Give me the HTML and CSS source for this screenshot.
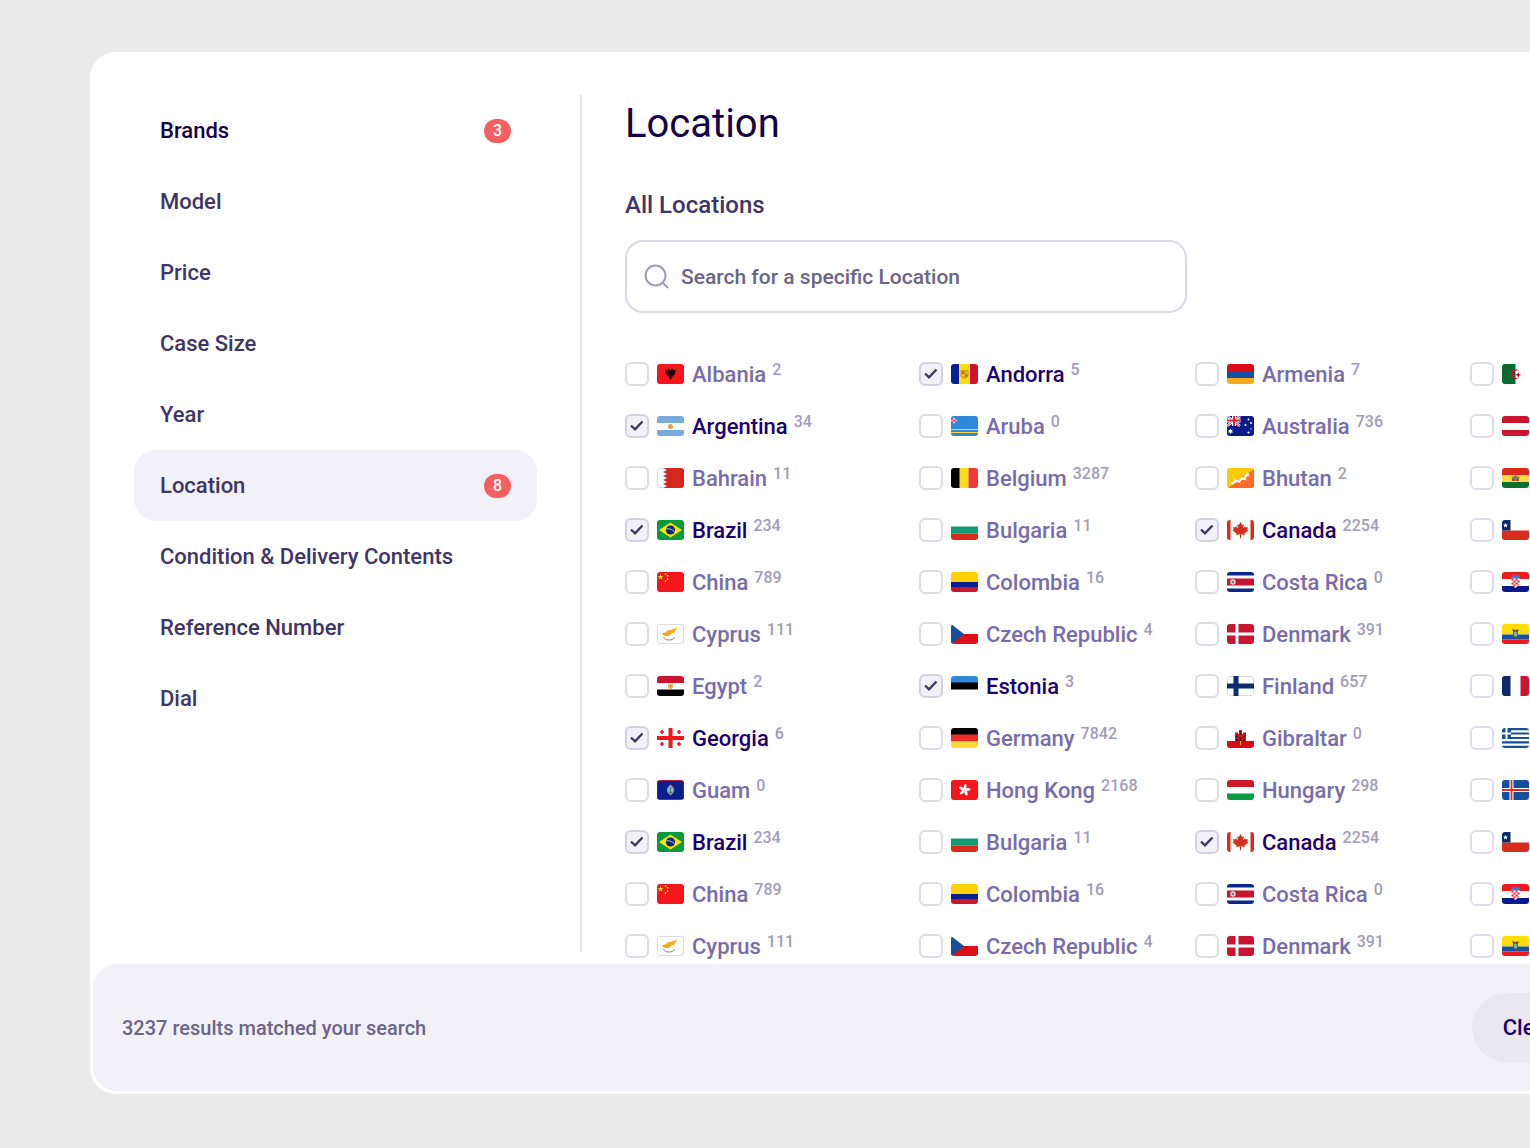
FILE: index.html
```html
<!DOCTYPE html>
<html lang="en">
<head>
<meta charset="utf-8">
<meta name="viewport" content="width=device-width, initial-scale=1">
<title>Filters – Location</title>
<link rel="stylesheet" href="styles.css">
</head>
<body>
<svg class="sprite" aria-hidden="true">
  <symbol id="al" viewBox="0 0 27 20"><path fill="#f7141c" d="M0 0h27v20H0z"/><path fill="#200508" d="M13.500 6.500 12 4.500l-2 .7 1.500 1.300-3.300-.7v2l1.500.8-1.500.6 1.800 1-.9 1.300 2-.3-.7 1.600 1.500-.5.3 1.700 1.300 2 1.300-2 .3-1.700 1.500.5-.7-1.600 2 .3-.9-1.300 1.800-1-1.500-.6 1.500-.8v-2l-3.300.7L17 5.200l-2-.7z"/></symbol>
  <symbol id="ad" viewBox="0 0 27 20"><path fill="#0a2090" d="M0 0h9v20H0z"/><path fill="#ffdc16" d="M8 0h11v20H8z"/><path fill="#cf1230" d="M19 0h8v20h-8z"/><path fill="#d99a1c" d="M9.500 6h8v6l-2 2.500h-4L9.500 12z"/><path fill="#b8641e" d="M11 7.500h2v2h-2zm3.500 3h2v2h-2z"/><path fill="#f3cf48" d="M14.500 7.500h2v2h-2zM11 10.500h2v2h-2z"/></symbol>
  <symbol id="am" viewBox="0 0 27 20"><path fill="#dc0a14" d="M0 0h27v7H0z"/><path fill="#1450a0" d="M0 7h27v7H0z"/><path fill="#f8a81c" d="M0 14h27v6H0z"/></symbol>
  <symbol id="dz" viewBox="0 0 27 20"><path fill="#fff" d="M0 0h27v20H0z"/><path fill="#046a32" d="M0 0h13.500v20H0z"/><path fill="#d21034" d="M17 6.600a5 5 0 1 0 0 7.200 4 4 0 1 1 0-7.200zM13.500 10.200l2.200-.5 1.200-1.800.2 2.200 2 .9-2 .6-.2 2.200-1.300-1.800z"/></symbol>
  <symbol id="ar" viewBox="0 0 27 20"><path fill="#fff" d="M0 0h27v20H0z"/><path fill="#78aadc" d="M0 0h27v7H0zm0 14h27v6H0z"/><circle cx="13.500" cy="10.500" r="2.500" fill="#e8a04a"/></symbol>
  <symbol id="aw" viewBox="0 0 27 20"><path fill="#3187d9" d="M0 0h27v20H0z"/><path fill="#ffd93c" d="M0 13h27v1H0zm0 3h27v1H0z"/><path fill="#fff" d="m3 1 1 2.600 2.600 1L4 5.600 3 8.200 2 5.600-.6 4.600 2 3.600z"/><path fill="#ef4040" d="m3 2.200.7 1.700 1.700.7-1.700.7L3 7l-.7-1.700-1.700-.7 1.700-.7z"/></symbol>
  <symbol id="au" viewBox="0 0 27 20"><path fill="#0a1c8c" d="M0 0h27v20H0z"/><path stroke="#fff" stroke-width="2.500" d="m0 0 13 10M13 0 0 10"/><path stroke="#e4173a" d="m0 0 13 10M13 0 0 10"/><path stroke="#fff" stroke-width="4" d="M7 0v10M0 4.500h13.500"/><path stroke="#f01c3c" stroke-width="2" d="M7 0v10M0 4.500h13.500"/><g fill="#fff"><path d="m3.500 12.500.7 1.500 1.600-.3-.8 1.400 1 1.300-1.600.1-.9 1.500-.9-1.500-1.600-.1 1-1.300-.8-1.400 1.600.3z"/><circle cx="18.500" cy="9" r="1"/><circle cx="24" cy="7" r="1"/><circle cx="21.500" cy="3.500" r="1"/><circle cx="24" cy="13" r=".7"/><circle cx="21.500" cy="16.500" r="1.100"/></g></symbol>
  <symbol id="at" viewBox="0 0 27 20"><path fill="#fff" d="M0 0h27v20H0z"/><path fill="#cb1530" d="M0 0h27v7H0zm0 14h27v6H0z"/></symbol>
  <symbol id="bh" viewBox="0 0 27 20"><path fill="#fff" d="M0 0h27v20H0z"/><path fill="#d4271e" d="M27 0H6l4 2-4 2 4 2-4 2 4 2-4 2 4 2-4 2 4 2-4 2h21z"/><path fill="none" stroke="#dcd9e8" d="M7 .5H3A2.500 2.500 0 0 0 .5 3v14A2.500 2.500 0 0 0 3 19.500h4"/></symbol>
  <symbol id="be" viewBox="0 0 27 20"><path d="M0 0h9v20H0z"/><path fill="#ffd91c" d="M8.500 0h9v20h-9z"/><path fill="#f03a3a" d="M17.500 0H27v20h-9.500z"/></symbol>
  <symbol id="bt" viewBox="0 0 27 20"><path fill="#ffca0a" d="M0 0h27v20H0z"/><path fill="#ff6c24" d="M27 1v19H1z"/><path fill="none" stroke="#fff" stroke-width="2" stroke-linecap="round" stroke-linejoin="round" d="m5 15.500 2-1 2-1.500 3.500.5 2-3 3 .5 1.500-3.500 2-1.500"/><path fill="none" stroke="#fff" stroke-width="1" stroke-linecap="round" d="m11 13 2.500 2.500M16 10l3.500 2M19 7.500l3 .5M17 6.500l-1-1M8 13l-.5-2"/></symbol>
  <symbol id="bo" viewBox="0 0 27 20"><path fill="#de2a18" d="M0 0h27v7H0z"/><path fill="#ffdb3c" d="M0 7h27v7H0z"/><path fill="#0a7230" d="M0 14h27v6H0z"/><path fill="#a86a24" d="m13.500 6.500 1.500 2 2.500.5-1 4h-6l-1-4L12 8.500z"/><circle cx="13.500" cy="10.500" r="1.800" fill="#5a8a80"/><path fill="#d03020" d="M10 11h2v2h-2zm5 0h2v2h-2z"/></symbol>
  <symbol id="br" viewBox="0 0 27 20"><path fill="#089a3c" d="M0 0h27v20H0z"/><path fill="#ffe000" d="M13.500 2.500 25 10l-11.500 7.500L2 10z"/><circle cx="13.500" cy="10" r="4.600" fill="#0c2878"/><path fill="none" stroke="#a8c8e0" d="M9.200 8.800c3-.5 6.500.8 8.500 3.200"/></symbol>
  <symbol id="bg" viewBox="0 0 27 20"><path fill="#fff" d="M0 0h27v7H0z"/><path fill="#129a74" d="M0 6.500h27v7H0z"/><path fill="#d82c1c" d="M0 13.500h27V20H0z"/></symbol>
  <symbol id="ca" viewBox="0 0 27 20"><path fill="#fff" d="M0 0h27v20H0z"/><path fill="#d82c1c" d="M0 0h3.500v20H0zm23.500 0H27v20h-3.500z"/><path fill="#d82c1c" d="m13.500 2 1.700 3 1.600-.8-.7 4 2.300-2 .5 1.300 2.100-.3-.7 2.300 1.200.7-4 3.200.5 1.500-4-.6v3.900h-1v-3.900l-4 .6.500-1.500-4-3.200 1.200-.7L6 7.200l2.100.3.500-1.300 2.300 2-.7-4 1.600.8z"/></symbol>
  <symbol id="cl" viewBox="0 0 27 20"><path fill="#fff" d="M0 0h27v20H0z"/><path fill="#d82c1c" d="M0 10.500h27V20H0z"/><path fill="#0a2a6c" d="M0 0h8.500v10.500H0z"/><path fill="#fff" d="m3.500 3 .7 1.600h1.600l-1.200 1.200.5 1.700-1.600-.9-1.600.9.500-1.700-1.200-1.200h1.600z"/></symbol>
  <symbol id="cn" viewBox="0 0 27 20"><path fill="#f5161c" d="M0 0h27v20H0z"/><g fill="#ffdc18"><path d="m3.500 2 .8 2h2.200L4.700 5.300l.7 2.200-1.900-1.300-1.900 1.300.7-2.200L.5 4h2.200z"/><circle cx="8.500" cy="2" r=".9"/><circle cx="10.500" cy="4" r=".9"/><circle cx="10.500" cy="7" r=".9"/><circle cx="8.500" cy="9" r=".9"/></g></symbol>
  <symbol id="co" viewBox="0 0 27 20"><path fill="#ffd000" d="M0 0h27v10H0z"/><path fill="#0a1e90" d="M0 10h27v5H0z"/><path fill="#cb1530" d="M0 15h27v5H0z"/></symbol>
  <symbol id="cr" viewBox="0 0 27 20"><path fill="#fff" d="M0 0h27v20H0z"/><path fill="#0a2890" d="M0 0h27v3.500H0zm0 16.500h27V20H0z"/><path fill="#cb1530" d="M0 6.500h27v7H0z"/><circle cx="6" cy="10" r="2.700" fill="#e8e8e4"/><circle cx="6" cy="10" r="1.500" fill="#6a8a80"/></symbol>
  <symbol id="hr" viewBox="0 0 27 20"><path fill="#fff" d="M0 0h27v20H0z"/><path fill="#f5161c" d="M0 0h27v7H0z"/><path fill="#0a1a8c" d="M0 14h27v6H0z"/><path fill="#3a78c8" d="m9 4 1.500-1.500L12 3.500l1.500-1.500L15 3.500l1.500-1L18 4l-.5 3h-8z"/><path fill="#fff" d="M9.500 6.500h8v6l-4 3.500-4-3.500z"/><path fill="#f5161c" d="M9.500 6.500h2v2h-2zm4 0h2v2h-2zm-2 2h2v2h-2zm4 0h2v2h-2zm-6 2h2v2h-2zm4 0h2v2h-2zm-2 2h2v2h-2zm4 0h2l-2 2z"/></symbol>
  <symbol id="cy" viewBox="0 0 27 20"><rect x=".5" y=".5" width="26" height="19" rx="2.500" fill="#fff" stroke="#dcd9e8"/><path fill="#f8a81c" d="m5.500 9 3-.5 2-2 4-.7L21 3.500 18 7l-.5 1.500-3 .8L12 12 8 12l-2.500-1.500z"/><path fill="none" stroke="#76859a" d="M6.500 13c1 2.500 3 3 5.500 3s4.500-.5 5.500-3"/></symbol>
  <symbol id="cz" viewBox="0 0 27 20"><path fill="#fff" d="M0 0h27v20H0z"/><path fill="#de0f17" d="M0 10h27v10H0z"/><path fill="#17509a" d="m0 0 13 10L0 20z"/></symbol>
  <symbol id="dk" viewBox="0 0 27 20"><path fill="#cb1530" d="M0 0h27v20H0z"/><path stroke="#fff" stroke-width="3" d="M10 0v20M0 10h27"/></symbol>
  <symbol id="ec" viewBox="0 0 27 20"><path fill="#ffdd00" d="M0 0h27v10.500H0z"/><path fill="#1450a0" d="M0 10.500h27v5H0z"/><path fill="#f5161c" d="M0 15.500h27V20H0z"/><path fill="#6a5a30" d="m10 5 3.500 1L17 5l-1 2.500V12l-2.500 3-2.500-3V7.500z"/><ellipse cx="13.500" cy="10" rx="1.700" ry="2.500" fill="#78b4a8"/></symbol>
  <symbol id="eg" viewBox="0 0 27 20"><path fill="#fff" d="M0 0h27v20H0z"/><path fill="#cb1530" d="M0 0h27v7H0z"/><path d="M0 13.500h27V20H0z"/><path fill="#e2c068" d="M11 7.500h1.500l1 .7 1-.7H16v4l-1 1.500h-3l-1-1.500z"/><path fill="#b88838" d="M13 9h1v2.500h-1z"/></symbol>
  <symbol id="ee" viewBox="0 0 27 20"><path fill="#fff" d="M0 0h27v20H0z"/><path fill="#3187d9" d="M0 0h27v7H0z"/><path d="M0 6.500h27v7H0z"/></symbol>
  <symbol id="fi" viewBox="0 0 27 20"><rect x=".5" y=".5" width="26" height="19" rx="2.500" fill="#fff" stroke="#dcd9e8"/><path stroke="#0c2c6e" stroke-width="5" d="M9 0v20M0 10h27"/></symbol>
  <symbol id="fr" viewBox="0 0 27 20"><path fill="#fff" d="M0 0h27v20H0z"/><path fill="#0c2866" d="M0 0h8.500v20H0z"/><path fill="#cf1430" d="M18.500 0H27v20h-8.500z"/></symbol>
  <symbol id="ge" viewBox="0 0 27 20"><path fill="#fff" d="M0 0h27v20H0z"/><path stroke="#f5161c" stroke-width="4" d="M13.500 0v20M0 10h27"/><path stroke="#f5161c" stroke-width="1.700" d="M5 2v4M3 4h4m15-2v4m-2-2h4M5 14v4m-2-2h4m15-2v4m-2-2h4"/></symbol>
  <symbol id="de" viewBox="0 0 27 20"><path d="M0 0h27v7H0z"/><path fill="#f02c26" d="M0 6.500h27v7H0z"/><path fill="#ffd93a" d="M0 13.500h27V20H0z"/></symbol>
  <symbol id="gi" viewBox="0 0 27 20"><path fill="#fff" d="M0 0h27v20H0z"/><path fill="#dc0a14" d="M0 13h27v7H0z"/><path fill="#c81820" d="M8 4.500h3V6h1V2h3v4h1V4.500h3V13H8z"/><path fill="#401014" d="M9 7.500h1.500v2H9zm4-4h1v3h-1zm3.500 4H18v2h-1.500zM9 11h2v2H9zm3.500-1.500h2V13h-2zM16 11h2v2h-2z"/><path fill="#e8b030" d="M13 13h1v4h-1z"/></symbol>
  <symbol id="gr" viewBox="0 0 27 20"><path fill="#fff" d="M0 0h27v20H0z"/><path fill="#17509a" d="M0 0h27v2.200H0zm0 4.400h27v2.200H0zm0 4.500h27v2.200H0zm0 4.400h27v2.200H0zm0 4.500h27V20H0zM0 0h9v11H0z"/><path stroke="#fff" stroke-width="2" d="M4.500 0v11M0 5.500h9"/></symbol>
  <symbol id="gu" viewBox="0 0 27 20"><path fill="#b02038" d="M0 0h27v20H0z"/><path fill="#0a1e8c" d="M.5 1h26v18H.5z"/><path fill="#c45a48" d="M13.500 4.500c5 3.500 5 7.500 0 11-5-3.500-5-7.500 0-11z"/><path fill="#78b8dc" d="M13.500 5.200c4.300 3.200 4.300 6.400 0 9.600-4.300-3.200-4.300-6.400 0-9.600z"/><path fill="#4a8050" d="M13 7h1v5h-1zM11.500 12h4l-2 2z"/></symbol>
  <symbol id="hk" viewBox="0 0 27 20"><path fill="#f5161c" d="M0 0h27v20H0z"/><g fill="#fff"><ellipse cx="13.500" cy="6.800" rx="1.500" ry="2.900" transform="rotate(10 13.500 10)"/><ellipse cx="13.500" cy="6.800" rx="1.500" ry="2.900" transform="rotate(82 13.500 10)"/><ellipse cx="13.500" cy="6.800" rx="1.500" ry="2.900" transform="rotate(154 13.500 10)"/><ellipse cx="13.500" cy="6.800" rx="1.500" ry="2.900" transform="rotate(226 13.500 10)"/><ellipse cx="13.500" cy="6.800" rx="1.500" ry="2.900" transform="rotate(298 13.500 10)"/></g></symbol>
  <symbol id="hu" viewBox="0 0 27 20"><path fill="#fff" d="M0 0h27v20H0z"/><path fill="#cf1a2c" d="M0 0h27v7H0z"/><path fill="#0a9a44" d="M0 13.500h27V20H0z"/></symbol>
  <symbol id="is" viewBox="0 0 27 20"><path fill="#1450a0" d="M0 0h27v20H0z"/><path stroke="#fff" stroke-width="4" d="M9.500 0v20M0 10h27"/><path stroke="#e0301c" stroke-width="1.800" d="M9.500 0v20M0 10h27"/></symbol>
</svg>

<div class="stage">
  <div class="panel">
    <div class="panel-body">
      <nav class="sidebar" aria-label="Filters">
        <ul class="filters">
          <li><a class="filter filter-set" href="#">Brands <span class="badge">3</span></a></li>
          <li><a class="filter" href="#">Model</a></li>
          <li><a class="filter" href="#">Price</a></li>
          <li><a class="filter" href="#">Case Size</a></li>
          <li><a class="filter" href="#">Year</a></li>
          <li><a class="filter filter-active" href="#" aria-current="true">Location <span class="badge">8</span></a></li>
          <li><a class="filter" href="#">Condition &amp; Delivery Contents</a></li>
          <li><a class="filter" href="#">Reference Number</a></li>
          <li><a class="filter" href="#">Dial</a></li>
        </ul>
      </nav>
      <main class="content">
        <h1 class="title">Location</h1>
        <label class="search-label" for="search">All Locations</label>
        <div class="search">
          <svg class="search-icon" viewBox="0 0 25 25" aria-hidden="true"><circle cx="11.500" cy="11.500" r="10"/><path d="m18.500 18.500 5.500 5.500"/></svg>
          <input class="search-input" id="search" type="text" placeholder="Search for a specific Location">
        </div>
        <div class="countries">
          <label class="country"><input type="checkbox"><svg class="flag"><use href="#al"/></svg><span>Albania</span><sup>2</sup></label>
          <label class="country"><input type="checkbox" checked><svg class="flag"><use href="#ad"/></svg><span>Andorra</span><sup>5</sup></label>
          <label class="country"><input type="checkbox"><svg class="flag"><use href="#am"/></svg><span>Armenia</span><sup>7</sup></label>
          <label class="country"><input type="checkbox"><svg class="flag"><use href="#dz"/></svg><span>Algeria</span></label>

          <label class="country"><input type="checkbox" checked><svg class="flag"><use href="#ar"/></svg><span>Argentina</span><sup>34</sup></label>
          <label class="country"><input type="checkbox"><svg class="flag"><use href="#aw"/></svg><span>Aruba</span><sup>0</sup></label>
          <label class="country"><input type="checkbox"><svg class="flag"><use href="#au"/></svg><span>Australia</span><sup>736</sup></label>
          <label class="country"><input type="checkbox"><svg class="flag"><use href="#at"/></svg><span>Austria</span></label>

          <label class="country"><input type="checkbox"><svg class="flag"><use href="#bh"/></svg><span>Bahrain</span><sup>11</sup></label>
          <label class="country"><input type="checkbox"><svg class="flag"><use href="#be"/></svg><span>Belgium</span><sup>3287</sup></label>
          <label class="country"><input type="checkbox"><svg class="flag"><use href="#bt"/></svg><span>Bhutan</span><sup>2</sup></label>
          <label class="country"><input type="checkbox"><svg class="flag"><use href="#bo"/></svg><span>Bolivia</span></label>

          <label class="country"><input type="checkbox" checked><svg class="flag"><use href="#br"/></svg><span>Brazil</span><sup>234</sup></label>
          <label class="country"><input type="checkbox"><svg class="flag"><use href="#bg"/></svg><span>Bulgaria</span><sup>11</sup></label>
          <label class="country"><input type="checkbox" checked><svg class="flag"><use href="#ca"/></svg><span>Canada</span><sup>2254</sup></label>
          <label class="country"><input type="checkbox"><svg class="flag"><use href="#cl"/></svg><span>Chile</span></label>

          <label class="country"><input type="checkbox"><svg class="flag"><use href="#cn"/></svg><span>China</span><sup>789</sup></label>
          <label class="country"><input type="checkbox"><svg class="flag"><use href="#co"/></svg><span>Colombia</span><sup>16</sup></label>
          <label class="country"><input type="checkbox"><svg class="flag"><use href="#cr"/></svg><span>Costa Rica</span><sup>0</sup></label>
          <label class="country"><input type="checkbox"><svg class="flag"><use href="#hr"/></svg><span>Croatia</span></label>

          <label class="country"><input type="checkbox"><svg class="flag"><use href="#cy"/></svg><span>Cyprus</span><sup>111</sup></label>
          <label class="country"><input type="checkbox"><svg class="flag"><use href="#cz"/></svg><span>Czech Republic</span><sup>4</sup></label>
          <label class="country"><input type="checkbox"><svg class="flag"><use href="#dk"/></svg><span>Denmark</span><sup>391</sup></label>
          <label class="country"><input type="checkbox"><svg class="flag"><use href="#ec"/></svg><span>Ecuador</span></label>

          <label class="country"><input type="checkbox"><svg class="flag"><use href="#eg"/></svg><span>Egypt</span><sup>2</sup></label>
          <label class="country"><input type="checkbox" checked><svg class="flag"><use href="#ee"/></svg><span>Estonia</span><sup>3</sup></label>
          <label class="country"><input type="checkbox"><svg class="flag"><use href="#fi"/></svg><span>Finland</span><sup>657</sup></label>
          <label class="country"><input type="checkbox"><svg class="flag"><use href="#fr"/></svg><span>France</span></label>

          <label class="country"><input type="checkbox" checked><svg class="flag"><use href="#ge"/></svg><span>Georgia</span><sup>6</sup></label>
          <label class="country"><input type="checkbox"><svg class="flag"><use href="#de"/></svg><span>Germany</span><sup>7842</sup></label>
          <label class="country"><input type="checkbox"><svg class="flag"><use href="#gi"/></svg><span>Gibraltar</span><sup>0</sup></label>
          <label class="country"><input type="checkbox"><svg class="flag"><use href="#gr"/></svg><span>Greece</span></label>

          <label class="country"><input type="checkbox"><svg class="flag"><use href="#gu"/></svg><span>Guam</span><sup>0</sup></label>
          <label class="country"><input type="checkbox"><svg class="flag"><use href="#hk"/></svg><span>Hong Kong</span><sup>2168</sup></label>
          <label class="country"><input type="checkbox"><svg class="flag"><use href="#hu"/></svg><span>Hungary</span><sup>298</sup></label>
          <label class="country"><input type="checkbox"><svg class="flag"><use href="#is"/></svg><span>Iceland</span></label>

          <label class="country"><input type="checkbox" checked><svg class="flag"><use href="#br"/></svg><span>Brazil</span><sup>234</sup></label>
          <label class="country"><input type="checkbox"><svg class="flag"><use href="#bg"/></svg><span>Bulgaria</span><sup>11</sup></label>
          <label class="country"><input type="checkbox" checked><svg class="flag"><use href="#ca"/></svg><span>Canada</span><sup>2254</sup></label>
          <label class="country"><input type="checkbox"><svg class="flag"><use href="#cl"/></svg><span>Chile</span></label>

          <label class="country"><input type="checkbox"><svg class="flag"><use href="#cn"/></svg><span>China</span><sup>789</sup></label>
          <label class="country"><input type="checkbox"><svg class="flag"><use href="#co"/></svg><span>Colombia</span><sup>16</sup></label>
          <label class="country"><input type="checkbox"><svg class="flag"><use href="#cr"/></svg><span>Costa Rica</span><sup>0</sup></label>
          <label class="country"><input type="checkbox"><svg class="flag"><use href="#hr"/></svg><span>Croatia</span></label>

          <label class="country"><input type="checkbox"><svg class="flag"><use href="#cy"/></svg><span>Cyprus</span><sup>111</sup></label>
          <label class="country"><input type="checkbox"><svg class="flag"><use href="#cz"/></svg><span>Czech Republic</span><sup>4</sup></label>
          <label class="country"><input type="checkbox"><svg class="flag"><use href="#dk"/></svg><span>Denmark</span><sup>391</sup></label>
          <label class="country"><input type="checkbox"><svg class="flag"><use href="#ec"/></svg><span>Ecuador</span></label>
        </div>
      </main>
    </div>
    <footer class="footer">
      <p class="results">3237 results matched your search</p>
      <button class="clear" type="button">Clear All</button>
    </footer>
  </div>
</div>
</body>
</html>
```
FILE: styles.css
```css
*,
*::before,
*::after {
  box-sizing: border-box;
}

body {
  margin: 0;
  background: #ebebeb;
  color: #3f3566;
  font-family: Roboto, "Liberation Sans", sans-serif;
  font-size: 22px;
  font-weight: 500;
  line-height: 24px;
}

.sprite {
  display: none;
}

/* The panel runs past the right edge of the window and is cut there. */
.stage {
  padding: 52px 0 54px 90px;
  overflow: hidden;
}

.panel {
  margin-right: -119px;
  padding: 43px 3px 3px;
  border-radius: 26px;
  background: #fff;
}

.panel-body {
  display: flex;
}

/* Sidebar */

.sidebar {
  flex: none;
  width: 489px;
  margin-bottom: 12px;
  padding: 0 43px 0 41px;
  border-right: 2px solid #e6e4ee;
}

.filters {
  margin: 0;
  padding: 0;
  list-style: none;
}

.filter {
  display: flex;
  align-items: center;
  justify-content: space-between;
  height: 71px;
  padding: 0 26px;
  border-radius: 22px;
  color: #3f3566;
  text-decoration: none;
}

.filter-set {
  color: #140044;
}

.filter-active {
  background: #f2f1f8;
}

.badge {
  width: 27px;
  border-radius: 12px;
  background: #f46062;
  color: #fff;
  font-size: 16px;
  text-align: center;
}

/* Location content */

.content {
  flex: 1;
  min-width: 0;
  padding: 5px 0 6px 43px;
}

.title {
  margin: 0 0 37px;
  color: #140044;
  font-size: 40px;
  font-weight: 400;
  line-height: 48px;
}

.search-label {
  display: block;
  margin-bottom: 15px;
  font-size: 24px;
  line-height: 40px;
}

.search {
  display: flex;
  align-items: center;
  gap: 12px;
  max-width: 562px;
  height: 73px;
  margin-bottom: 49px;
  padding: 0 17px;
  border: 2px solid #dcdaea;
  border-radius: 18px;
}

.search-icon {
  flex: none;
  width: 25px;
  height: 25px;
  fill: none;
  stroke: #a19cba;
  stroke-width: 2;
}

.search-input {
  flex: 1;
  min-width: 0;
  padding: 0;
  border: 0;
  outline: 0;
  background: none;
  color: #3f3566;
  font: inherit;
  font-size: 21px;
}

.search-input::placeholder {
  color: #6b6589;
  opacity: 1;
}

.countries {
  display: grid;
  grid-template-columns: 294px 276px 275px 1fr;
  row-gap: 28px;
}

.country {
  display: flex;
  align-items: center;
  gap: 8px;
  height: 24px;
  color: #796cac;
  white-space: nowrap;
}

.country span {
  padding-top: 2px;
}

.country input {
  flex: none;
  width: 24px;
  height: 24px;
  margin: 0;
  border: 2px solid #dfdce9;
  border-radius: 6px;
  background: #fff;
  appearance: none;
}

.country input:checked {
  border-color: #d5d1e2;
  background: #f2f1f8 url("data:image/svg+xml,%3Csvg xmlns='http://www.w3.org/2000/svg' viewBox='0 0 20 20'%3E%3Cpath d='M4 9.500l4 3.800 7.500-7.800' fill='none' stroke='%233f3566' stroke-width='2.400'/%3E%3C/svg%3E") center / 20px 20px no-repeat;
}

.country:has(:checked) {
  color: #1c0070;
}

.flag {
  flex: none;
  width: 27px;
  height: 20px;
  border-radius: 3px;
}

.country sup {
  align-self: flex-start;
  margin-left: -2px;
  color: #a29dba;
  font-size: 16px;
  line-height: 16px;
}

/* Footer */

.footer {
  display: flex;
  align-items: center;
  justify-content: space-between;
  height: 127px;
  padding: 0 30px 0 29px;
  border-radius: 24px;
  background: #f2f1f8;
}

.results {
  margin: 0;
  color: #6b6589;
  font-size: 20px;
}

.clear {
  width: 144px;
  height: 69px;
  padding: 0;
  border: 0;
  border-radius: 35px;
  background: #e9e7f0;
  color: #1c0070;
  font: inherit;
}
```
